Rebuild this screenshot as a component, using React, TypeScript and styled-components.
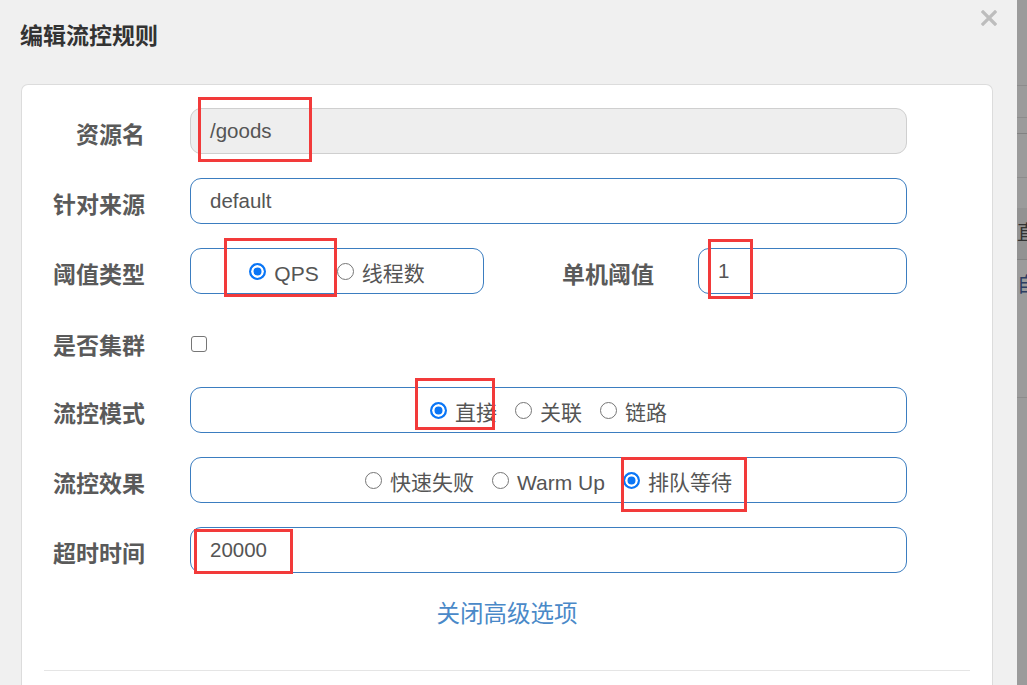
import styled, { createGlobalStyle } from "styled-components";

const GlobalStyle = createGlobalStyle`
  html, body {
    margin: 0;
    padding: 0;
    background: #f0f0f0;
  }
  * {
    box-sizing: border-box;
  }
`;

type Option = { label: string; checked?: boolean };

const thresholdTypes: Option[] = [{ label: "QPS", checked: true }, { label: "线程数" }];
const controlModes: Option[] = [{ label: "直接", checked: true }, { label: "关联" }, { label: "链路" }];
const controlEffects: Option[] = [
  { label: "快速失败" },
  { label: "Warm Up" },
  { label: "排队等待", checked: true },
];

// red highlight boxes drawn over the screenshot
const marks = [
  { left: 198, top: 97, width: 114, height: 65 },
  { left: 224, top: 238, width: 113, height: 59 },
  { left: 708, top: 239, width: 45, height: 60 },
  { left: 415, top: 378, width: 80, height: 52 },
  { left: 621, top: 457, width: 126, height: 55 },
  { left: 194, top: 529, width: 99, height: 45 },
];

function RadioGroup({ options }: { options: Option[] }) {
  return (
    <RadioBox>
      {options.map((o) => (
        <RadioItem key={o.label}>
          <RadioDot $checked={!!o.checked} />
          {o.label}
        </RadioItem>
      ))}
    </RadioBox>
  );
}

export default function App() {
  return (
    <Page>
      <GlobalStyle />
      <Modal>
        <Header>
          <Title>编辑流控规则</Title>
          <Close aria-label="close">
            <svg width="16" height="16" viewBox="0 0 16 16">
              <path d="M2 2 L14 14 M14 2 L2 14" stroke="#bdbdbd" strokeWidth="3.2" strokeLinecap="square" />
            </svg>
          </Close>
        </Header>
        <Card>
          <Form>
            <Label>资源名</Label>
            <Input $disabled>/goods</Input>

            <Label>针对来源</Label>
            <Input>default</Input>

            <Label>阈值类型</Label>
            <SplitRow>
              <RadioGroup options={thresholdTypes} />
              <Label>单机阈值</Label>
              <Input>1</Input>
            </SplitRow>

            <Label $short>是否集群</Label>
            <CheckRow>
              <Checkbox />
            </CheckRow>

            <Label>流控模式</Label>
            <RadioGroup options={controlModes} />

            <Label>流控效果</Label>
            <RadioGroup options={controlEffects} />

            <Label>超时时间</Label>
            <Input>20000</Input>
          </Form>
          <Toggle>关闭高级选项</Toggle>
          <Divider />
        </Card>
      </Modal>
      <Backdrop>
        <BgLine $top={85} />
        <BgLine $top={117} />
        <BgLine $top={133} $dark />
        <BgLine $top={177} />
        <BgShade />
        <BgChar $top={221}>直</BgChar>
        <BgLine $top={259} $dark />
        <BgChar $top={273} $blue>
          自
        </BgChar>
        <BgLine $top={397} />
      </Backdrop>
      {marks.map((m, i) => (
        <Mark key={i} style={{ left: m.left, top: m.top, width: m.width, height: m.height }} />
      ))}
    </Page>
  );
}

const Page = styled.div`
  position: relative;
  width: 1027px;
  height: 685px;
  overflow: hidden;
  display: flex;
  font-family: "Liberation Sans", "Noto Sans CJK SC", sans-serif;
`;

const Modal = styled.div`
  width: 1017px;
  height: 685px;
  background: #f0f0f0;
  display: flex;
  flex-direction: column;
`;

const Header = styled.div`
  height: 84px;
  flex-shrink: 0;
  display: flex;
  justify-content: space-between;
  align-items: flex-start;
  padding: 0 20px;
`;

const Title = styled.h4`
  margin: 19px 0 0;
  font-family: "Noto Sans CJK SC", sans-serif;
  font-size: 23px;
  line-height: 30px;
  font-weight: 700;
  color: #333;
`;

const Close = styled.div`
  margin-top: 10px;
  width: 16px;
  height: 16px;
  display: flex;
`;

const Card = styled.div`
  margin-left: 21px;
  width: 972px;
  flex: 1;
  background: #fff;
  border: 1px solid #dcdcdc;
  border-bottom: none;
  border-radius: 7px 7px 0 0;
  padding: 23px 0 0;
`;

const Form = styled.div`
  display: grid;
  grid-template-columns: 123px 717px;
  column-gap: 45px;
  row-gap: 24px;
  align-items: center;
`;

const Label = styled.div<{ $short?: boolean }>`
  text-align: right;
  font-family: "Noto Sans CJK SC", sans-serif;
  font-size: 23px;
  font-weight: 700;
  color: #5a5a5a;
  line-height: 30px;
  padding-top: ${(p) => (p.$short ? "7px" : "3px")};
`;

const Input = styled.div<{ $disabled?: boolean }>`
  height: 46px;
  display: flex;
  align-items: center;
  padding: 0 19px;
  font-size: 20.5px;
  color: #555;
  border-radius: 11px;
  border: 1px solid ${(p) => (p.$disabled ? "#cfcfcf" : "#3b7dc0")};
  background: ${(p) => (p.$disabled ? "#eeeeee" : "#fff")};
`;

const SplitRow = styled.div`
  display: grid;
  grid-template-columns: 294px 1fr 209px;
  column-gap: 44px;
  align-items: center;
`;

const RadioBox = styled.div`
  height: 46px;
  display: flex;
  justify-content: center;
  align-items: center;
  gap: 18px;
  border: 1px solid #3b7dc0;
  border-radius: 11px;
  font-size: 21px;
  color: #555;
`;

const RadioItem = styled.label`
  display: flex;
  align-items: center;
  gap: 8px;
  line-height: 24px;
  padding-top: 6px;
`;

const RadioDot = styled.span<{ $checked: boolean }>`
  width: 17px;
  height: 17px;
  border-radius: 50%;
  flex-shrink: 0;
  margin-top: -6px;
  border: ${(p) => (p.$checked ? "2px solid #0a76f6" : "1px solid #767676")};
  background: ${(p) => (p.$checked ? "#0a76f6" : "#fff")};
  box-shadow: ${(p) => (p.$checked ? "inset 0 0 0 2.5px #fff" : "none")};
`;

const CheckRow = styled.div`
  height: 45px;
  display: flex;
  align-items: center;
  padding-top: 6px;
`;

const Checkbox = styled.span`
  width: 16px;
  height: 16px;
  margin-left: 1px;
  border: 1.5px solid #767676;
  border-radius: 3px;
  background: #fff;
`;

const Toggle = styled.div`
  margin-top: 23px;
  text-align: center;
  font-family: "Noto Sans CJK SC", sans-serif;
  font-size: 23.5px;
  line-height: 32px;
  color: #4a89c8;
`;

const Divider = styled.hr`
  margin: 42px 22px 0;
  border: none;
  border-top: 1px solid #e5e5e5;
`;

const Backdrop = styled.div`
  position: relative;
  flex: 1;
  background: #9b9b9b;
`;

const BgLine = styled.div<{ $top: number; $dark?: boolean }>`
  position: absolute;
  left: 0;
  right: 0;
  top: ${(p) => p.$top}px;
  height: 1px;
  background: ${(p) => (p.$dark ? "#828282" : "#8c8c8c")};
`;

const BgShade = styled.div`
  position: absolute;
  left: 0;
  right: 0;
  top: 208px;
  height: 51px;
  background: #929292;
`;

const BgChar = styled.span<{ $top: number; $blue?: boolean }>`
  position: absolute;
  left: 0;
  top: ${(p) => p.$top}px;
  font-family: "Noto Sans CJK SC", sans-serif;
  font-size: 20px;
  line-height: 22px;
  color: ${(p) => (p.$blue ? "#2c3e63" : "#333")};
`;

const Mark = styled.div`
  position: absolute;
  border: 3px solid #f23a3a;
  pointer-events: none;
`;
